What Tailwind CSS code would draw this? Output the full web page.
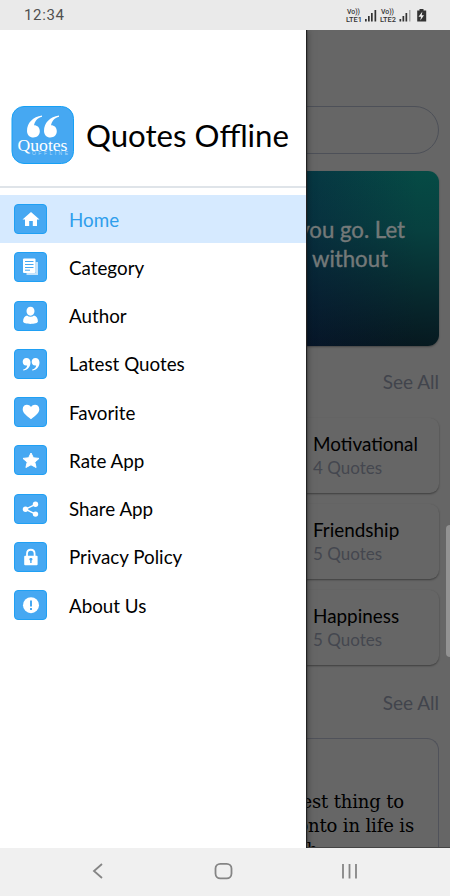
<!DOCTYPE html>
<html lang="en">
<head>
<meta charset="utf-8">
<title>Quotes Offline</title>
<script src="https://cdn.jsdelivr.net/npm/@tailwindcss/browser@4"></script>
</head>
<body class="w-[450px] h-[896px] overflow-hidden flex flex-col font-['Lato',sans-serif] bg-white">
<header class="h-[30px] shrink-0 bg-[#eaeaea] flex items-center justify-between pl-6 pr-[23px] text-[#505050]">
  <span class="font-['Roboto',sans-serif] text-[15px] leading-[30px] tracking-[0.65px]">12:34</span>
  <svg class="w-[82px] h-[16px]" viewBox="0 0 82 16" fill="#333" font-family="Roboto, sans-serif">
    <text x="2" y="7" font-size="7" textLength="13" lengthAdjust="spacingAndGlyphs" font-weight="500">Vo))</text>
    <text x="1" y="14.500" font-size="7.500" textLength="16" lengthAdjust="spacingAndGlyphs" font-weight="500">LTE1</text>
    <path d="M20 12h1.700v2.500H20zM23 9h1.700v5.500H23zM26 6h1.700v8.500H26zM29.500 3h1.700v11.500h-1.700z"/>
    <text x="36" y="7" font-size="7" textLength="13" lengthAdjust="spacingAndGlyphs" font-weight="500">Vo))</text>
    <text x="35" y="14.500" font-size="7.500" textLength="16" lengthAdjust="spacingAndGlyphs" font-weight="500">LTE2</text>
    <path d="M54.500 12h1.700v2.500h-1.700zM57.500 9h1.700v5.500h-1.700zM60.500 6h1.700v8.500h-1.700z"/><path fill="#aaa" d="M64 3h1.500v11.500H64z"/>
    <path d="M74.500 2h4v1.500h2.700v11h-9V3.500h2.300z"/><path fill="#eee" d="M77.400 4.500l-3.900 5.200h2.500l-.7 3.800 3.700-5.300h-2.300z"/>
  </svg>
</header>

<div class="relative h-[818px] shrink-0 overflow-hidden bg-[#666]">
  <main class="pt-[76px] pl-3 pr-[11px] text-right">
    <div class="h-[48px] rounded-full border border-[#4d5058]"></div>
    <section class="mt-[17px] h-[175px] rounded-[11px] shadow-[0_1px_2px_#0005] bg-[linear-gradient(186deg,#054b45_0%,#07403f_28%,#072329_66%,#060f16_94%)] relative overflow-hidden">
      <div class="absolute inset-0 bg-[linear-gradient(90deg,#08184080_60%,#08184000_95%)]"></div>
      <p class="relative pt-[44px] pr-[34px] text-[22.2px] leading-[29px] [-webkit-text-stroke:0.4px_#747979] text-[#747979]">wherever you go. Let</p>
      <p class="relative pr-[51px] text-[22.2px] leading-[29px] [-webkit-text-stroke:0.4px_#747979] text-[#747979]">no one leave without</p>
    </section>
    <div class="mt-[22px] h-[28px] text-[19px] leading-[28px] text-[#41444c]">See All</div>
    <section class="mt-[22px] flex flex-col gap-[11px] text-left">
      <article class="h-[75px] pl-[301px] pt-[13px] rounded-[9px] bg-[#666] shadow-[0_1px_2px_#0006]"><h3 class="text-[18.9px] leading-[25px] text-black">Motivational</h3><p class="text-[17px] leading-[24px] text-[#44474f]">4 Quotes</p></article>
      <article class="h-[75px] pl-[301px] pt-[13px] rounded-[9px] bg-[#666] shadow-[0_1px_2px_#0006]"><h3 class="text-[18.9px] leading-[25px] text-black">Friendship</h3><p class="text-[17px] leading-[24px] text-[#44474f]">5 Quotes</p></article>
      <article class="h-[75px] pl-[301px] pt-[13px] rounded-[9px] bg-[#666] shadow-[0_1px_2px_#0006]"><h3 class="text-[18.9px] leading-[25px] text-black">Happiness</h3><p class="text-[17px] leading-[24px] text-[#44474f]">5 Quotes</p></article>
    </section>
    <div class="mt-[24px] h-[28px] text-[19px] leading-[28px] text-[#41444c]">See All</div>
    <section class="mt-[21px] h-[120px] overflow-hidden rounded-t-[12px] border border-b-0 border-[#50525a] pt-[51px] font-['DejaVu_Serif',serif] text-[18px] leading-[24px] tracking-[-0.15px] text-black">
      <p class="pr-[34px]">The best thing to</p>
      <p class="pr-[24px]">hold onto in life is</p>
      <p class="pr-[120px]">each oth</p>
    </section>
  </main>
  <div class="absolute inset-x-0 bottom-0 h-px bg-[#444]"></div>
  <div class="absolute top-[495px] right-0 w-[4px] h-[132px] rounded-l-[4px] bg-[#929292]"></div>

  <aside class="absolute inset-y-0 left-0 w-[306px] bg-white shadow-[1px_0_1px_#222,0_0_8px_#0008]">
    <div class="h-[156px] pt-[76px] pl-[11px] flex items-start gap-[12px]">
      <svg class="w-[63px] h-[58px] shrink-0" viewBox="0 0 63 58">
        <rect x="1" y="0.500" width="61.500" height="57" rx="12" fill="#46a8f2" stroke="#16a0f5"/>
        <path fill="#fff" d="M31 9.500C22 10.500 16 17 16 25c0 3.800 2.700 6.500 6.400 6.500 3.900 0 6.400-2.700 6.400-6.200 0-3.700-2.400-6-5.800-6C24 15 26.500 12 31 10.800z"/>
        <path fill="#fff" d="M48 9.500C39 10.500 33 17 33 25c0 3.800 2.700 6.500 6.400 6.500 3.900 0 6.400-2.700 6.400-6.200 0-3.700-2.400-6-5.800-6C41 15 43.500 12 48 10.800z"/>
        <text x="6.500" y="44.500" font-family="Liberation Serif, serif" font-size="17" fill="#fff" textLength="50" lengthAdjust="spacingAndGlyphs">Quotes</text>
        <text x="21" y="49" font-family="Liberation Sans, sans-serif" font-size="5" fill="#b5dcfa" textLength="36">OFFLINE</text>
      </svg>
      <h1 class="pt-[10px] text-[31.2px] leading-[38px] text-black whitespace-nowrap">Quotes Offline</h1>
    </div>
    <div class="h-[2px] bg-[#dfe4e9]"></div>
    <nav class="pt-[7px] text-[18.8px] text-black [&_a]:flex [&_a]:h-[48.25px] [&_a]:items-center [&_a]:gap-[22px] [&_a]:pl-[14px] [&_span]:pt-[1px] [&_svg]:w-[33px] [&_svg]:h-[30px] [&_svg]:shrink-0 [&_svg]:rounded-[4px] [&_svg]:bg-[#46a8f2] [&_svg]:border [&_svg]:border-[#20a0f4]">
      <a class="bg-[#d6eaff] text-[#2f9eec]"><svg viewBox="0 0 31 28"><path fill="#fff" d="M16 7L24.500 14.500H22V21h-4.200v-5h-3.600v5H10v-6.500H7.500z"/></svg><span>Home</span></a>
      <a><svg viewBox="0 0 31 28"><path fill="#c5e3fb" d="M20.500 9H23v13H11.500v-2h9z"/><rect x="8" y="5.500" width="12.500" height="14.500" rx="1" fill="#fff"/><path stroke="#46a8f2" d="M10 8.500h8.500M10 11.500h8.500M10 14.500h8.500M10 17.200h5"/></svg><span>Category</span></a>
      <a><svg viewBox="0 0 31 28"><path fill="#fff" d="M15.500 4.700c2.500 0 4 2 4 4.300 0 2.500-1.500 4.700-4 4.700s-4-2.200-4-4.700c0-2.300 1.500-4.300 4-4.300zM12 13.500c2 1.700 5 1.700 7 0 2.500.6 3.900 2.800 3.900 6.100 0 3.200-14.800 3.200-14.800 0 0-3.300 1.400-5.500 3.900-6.100z"/></svg><span>Author</span></a>
      <a><svg viewBox="0 0 31 28"><path fill="#fff" d="M11.300 8c2.700 0 4.200 1.900 4.200 4.400 0 4.300-3 7.600-7.300 8.200v-1c2.500-.7 3.700-2.200 4-4.200-2.700.7-4.500-1.100-4.500-3.600C7.700 9.500 9.200 8 11.300 8zM20.300 8c2.700 0 4.200 1.900 4.200 4.400 0 4.300-3 7.600-7.300 8.200v-1c2.500-.7 3.700-2.200 4-4.200-2.700.7-4.500-1.100-4.500-3.600C16.700 9.500 18.200 8 20.300 8z"/></svg><span>Latest Quotes</span></a>
      <a><svg viewBox="0 0 31 28"><path fill="#fff" d="M16 21.300C11 17.500 7.700 14.700 7.700 11.300c0-5 6-5.800 8.300-2.300 2.300-3.500 8.300-2.700 8.300 2.300 0 3.400-3.300 6.200-8.300 10z"/></svg><span>Favorite</span></a>
      <a><svg viewBox="0 0 31 28"><path fill="#fff" stroke="#fff" stroke-linejoin="round" d="M16 7l2.400 4.800 5.600.6-4.200 3.800 1.300 5.300-5.100-2.700-5.100 2.700 1.300-5.300-4.200-3.800 5.600-.6z"/></svg><span>Rate App</span></a>
      <a><svg viewBox="0 0 31 28"><path fill="none" stroke="#fff" stroke-width="1.500" d="M20.500 9.300l-10 4.900 10 4.900"/><g fill="#fff"><circle cx="20.500" cy="9.300" r="2.700"/><circle cx="10.500" cy="14.200" r="2.700"/><circle cx="20.500" cy="19.100" r="2.700"/></g></svg><span>Share App</span></a>
      <a><svg viewBox="0 0 31 28"><path fill="none" stroke="#fff" stroke-width="1.800" d="M12 14v-3.200c0-5.400 7.600-5.400 7.600 0V14"/><rect x="9.200" y="12.800" width="13.400" height="9.400" rx="1" fill="#fff"/><path fill="#46a8f2" d="M15.900 15a1.300 1.300 0 0 1 .7 2.500v2.500h-1.400v-2.500a1.300 1.300 0 0 1 .7-2.500z"/></svg><span>Privacy Policy</span></a>
      <a><svg viewBox="0 0 31 28"><circle cx="16" cy="14.200" r="8" fill="#fff"/><path fill="#46a8f2" d="M15 9.500h2v6h-2zM15 17h2v2h-2z"/></svg><span>About Us</span></a>
    </nav>
  </aside>
</div>

<footer class="h-[48px] shrink-0 bg-[#f0f0f0]">
  <svg class="w-[450px] h-[48px]" viewBox="0 0 450 48" fill="none" stroke="#858585" stroke-width="1.800">
    <path d="M102 16l-8 7 8 7"/>
    <rect x="215.500" y="15.800" width="16" height="14.600" rx="4.800"/>
    <path d="M343 16v14.500M349.500 16v14.500M356 16v14.500"/>
  </svg>
</footer>
</body>
</html>
